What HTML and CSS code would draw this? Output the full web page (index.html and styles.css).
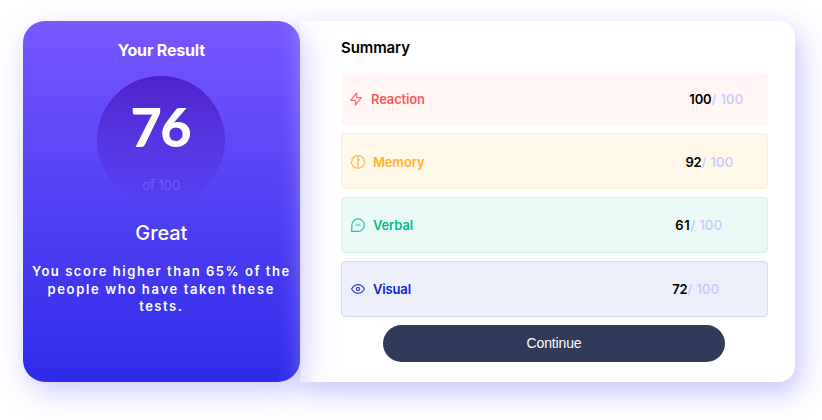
FILE: index.html
```html
<!DOCTYPE html>
<html lang="en">
<head>
<meta charset="utf-8">
<title>Results summary</title>
<link rel="stylesheet" href="styles.css">
</head>
<body>
<main class="card">
  <section class="result">
    <h1 class="result-title">Your Result</h1>
    <div class="circle"><span class="score">76</span><span class="of">of 100</span></div>
    <h2 class="grade">Great</h2>
    <p class="message"><span class="line first">You score higher than 65% of the</span> <span class="line second">people who have taken these</span> <span class="line third">tests.</span></p>
  </section>
  <section class="summary">
    <h2 class="summary-title">Summary</h2>
    <div class="row reaction">
      <svg class="icon" viewBox="0 0 20 20"><path d="M10.8 8.3V2.5L3.3 11.7h5.9v5.8l7.5-9.2z"/></svg>
      <span class="label">Reaction</span><span class="value">100</span><span class="total">/ 100</span>
    </div>
    <div class="row memory">
      <svg class="icon" viewBox="0 0 20 20"><path d="M10 2.5v15M10 3.5C8.5 1 5.3 2 5.2 4.2 2.8 4.3 2 6.7 3 8.1c-2 1.2-2 4.3.2 5.3-.2 2.3 1.6 3.4 3.2 3.1 1.1 1.8 3.3 1.4 3.6 0M10 3.5c1.5-2.5 4.7-1.5 4.8.7 2.4.1 3.2 2.5 2.2 3.9 2 1.2 2 4.3-.2 5.3.2 2.3-1.6 3.4-3.2 3.1-1.1 1.8-3.3 1.4-3.6 0M10 8.5l2-1.5"/></svg>
      <span class="label">Memory</span><span class="value">92</span><span class="total">/ 100</span>
    </div>
    <div class="row verbal">
      <svg class="icon" viewBox="0 0 20 20"><path d="M7.5 10h5M2 18l.3-3.5V10A7.8 7.8 0 1 1 10 18z"/></svg>
      <span class="label">Verbal</span><span class="value">61</span><span class="total">/ 100</span>
    </div>
    <div class="row visual">
      <svg class="icon" viewBox="0 0 20 20"><path d="M2 10c4-7.2 12-7.2 16 0-4 7.2-12 7.2-16 0z"/><circle cx="10" cy="10" r="2"/></svg>
      <span class="label">Visual</span><span class="value">72</span><span class="total">/ 100</span>
    </div>
    <button class="continue">Continue</button>
  </section>
</main>
</body>
</html>
```
FILE: styles.css
```css
* { box-sizing: border-box; }
body { margin: 0; min-height: 420px; display: flow-root; overflow: hidden; background: #fff; font-family: Inter, "Liberation Sans", sans-serif; }
h1, h2, p { margin: 0; }
.card { display: flex; width: 772.4px; height: 360.7px; margin: 21px 0 0 22.6px; }
.result {
  position: relative; z-index: 1; width: 277.4px; border-radius: 22px;
  display: flex; flex-direction: column; align-items: center;
  padding-top: 19px; color: #fff; text-align: center;
  background: linear-gradient(#7857ff, #2e2be9);
  box-shadow: 5px 10px 30px rgba(110, 102, 255, .34);
}
.result::after {
  content: ""; position: absolute; inset: 0; border-radius: inherit;
  background: linear-gradient(to right, transparent 92%, rgba(200, 195, 255, .05) 96%, rgba(200, 195, 255, .2));
}
.result-title { font-size: 16px; line-height: 20px; font-weight: 700; letter-spacing: -.2px; }
.circle {
  width: 128px; height: 128px; margin-top: 16px; border-radius: 50%;
  display: flex; flex-direction: column; align-items: center;
  background: linear-gradient(#4d21c9, rgba(37, 33, 201, 0));
}
.score { margin-top: 22px; font-family: Lato, sans-serif; font-size: 54px; line-height: 58px; font-weight: 900; letter-spacing: -1.5px; margin-left: -2px; }
.of { margin-top: 20px; font-size: 13px; line-height: 18px; color: #7459f7; }
.grade { margin-top: 17px; font-size: 20px; line-height: 24px; font-weight: 500; letter-spacing: -.1px; }
.message { margin-top: 18px; font-size: 13px; line-height: 17.6px; font-weight: 600; }
.line { display: block; white-space: nowrap; letter-spacing: 1.53px; }
.second { letter-spacing: 1.65px; }
.summary {
  flex: 1; background: #fff; padding: 18px 27px 0 41px; border-radius: 0 16px 16px 0;
  display: flex; flex-direction: column; box-shadow: 5px 10px 30px rgba(90, 82, 255, .36);
}
.summary-title { font-size: 15px; line-height: 18px; font-weight: 600; letter-spacing: -.1px; color: #000; }
.row {
  display: flex; align-items: center; height: 56px; margin-bottom: 8px; padding-left: 8.5px;
  border: 1.5px solid; border-radius: 4px; font-size: 13px; line-height: 18px; font-weight: 600; letter-spacing: -.15px;
}
.icon { width: 16px; height: 16px; fill: none; stroke: currentColor; stroke-width: 1.5; stroke-linecap: round; stroke-linejoin: round; opacity: .85; }
.label { margin-left: 6.5px; flex: 1; }
.value { color: #000; font-weight: 600; }
.total { color: #c8c7ff; font-weight: 500; letter-spacing: .3px; }
.reaction { height: 53px; margin-top: 15.5px; color: #ff5757; background: #fff6f5; border-color: #fff6f5; padding-right: 23.5px; }
.reaction .icon { margin-left: -2px; }
.memory { margin-top: -.4px; padding-top: 1px; color: #ffb12c; background: #fff7e8; border-color: #ffefd0; padding-right: 33.5px; }
.verbal { color: #00bd91; background: #ebf9f6; border-color: #cff2e9; padding-right: 44.5px; }
.verbal .value { letter-spacing: .7px; }
.visual { color: #1125d4; background: #edeffb; border-color: #d5daf7; padding-right: 47.5px; }
.continue {
  width: 342px; height: 37px; margin: -.1px 0 0 42px; border: 0; border-radius: 18.5px; padding: 0 0 2px;
  background: #303b59; color: #fff; font: 14px "Liberation Sans", sans-serif; letter-spacing: -.15px;
}
```
